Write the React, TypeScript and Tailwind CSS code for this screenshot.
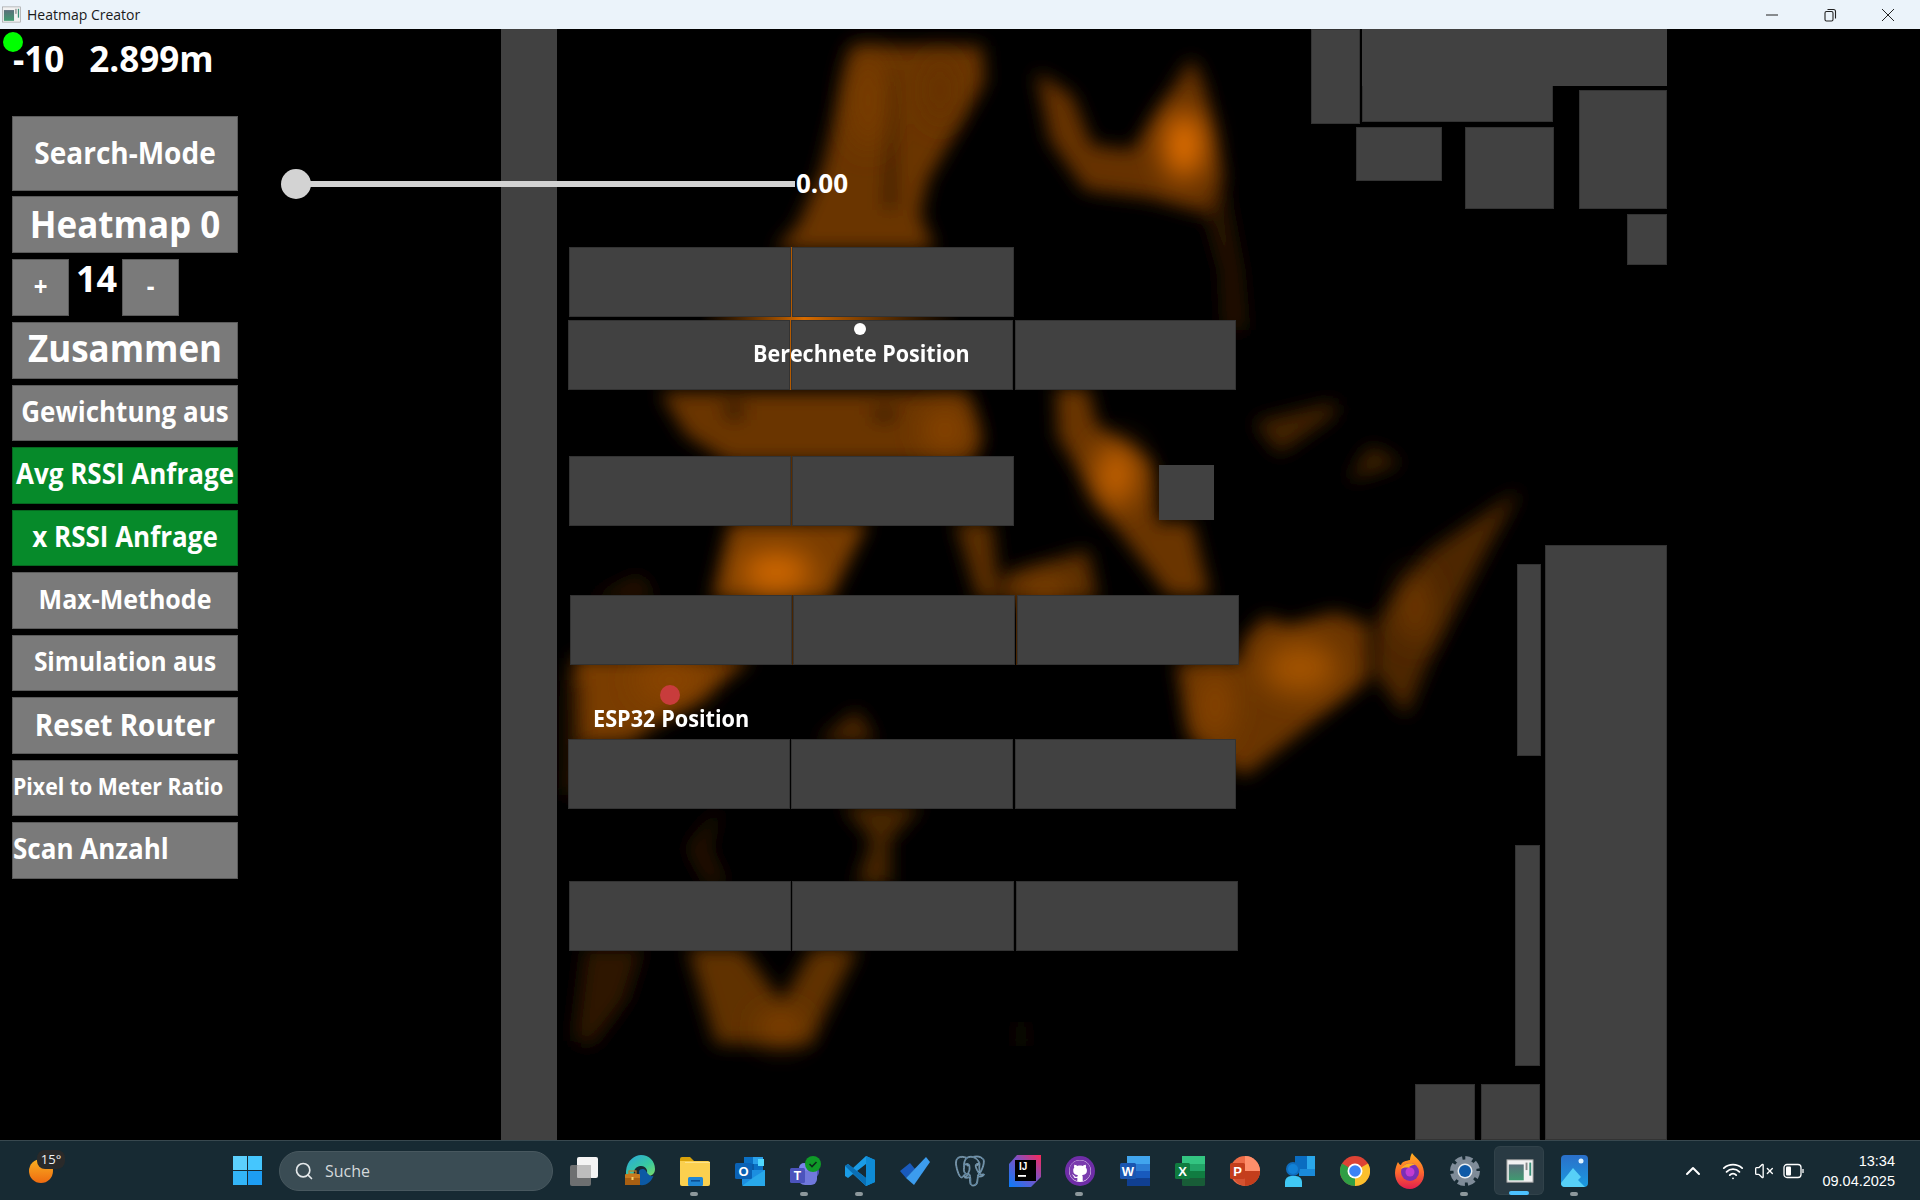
import React from "react";
import { Search, ChevronUp, Wifi, VolumeX } from "lucide-react";
import { SiPostgresql } from "react-icons/si";
import { FaGithub } from "react-icons/fa";

const Block = ({ c }: { c: string }) => (
  <div className={"absolute bg-[#414141] border border-[#333333] " + c} />
);

function Heat() {
  return (
    <svg className="absolute left-0 top-0 w-[1920px] h-[1111px]" viewBox="0 29 1920 1111">
      <defs>
        <filter id="b1" x="-40%" y="-40%" width="180%" height="180%"><feGaussianBlur stdDeviation="9" /></filter>
        <filter id="b2" x="-80%" y="-80%" width="260%" height="260%"><feGaussianBlur stdDeviation="15" /></filter>
        <linearGradient id="seam" x1="0" y1="0" x2="1" y2="0">
          <stop offset="0" stopColor="#a85400" stopOpacity="0" />
          <stop offset="0.4" stopColor="#d86c00" />
          <stop offset="1" stopColor="#a85400" stopOpacity="0" />
        </linearGradient>
      </defs>
      <g filter="url(#b1)">
        {/* top funnel */}
        <polygon fill="#6a3400" points="852,46 982,46 985,82 928,180 920,214 935,250 775,250 798,225 822,170" />
        <polygon fill="#2a1500" points="890,70 894,70 896,210 884,210" />
        {/* upper right */}
        <polygon fill="#663200" points="1036,72 1072,95 1092,145 1132,150 1192,58 1204,84 1224,180 1208,214 1150,198 1085,190 1050,140" />
        <polygon fill="#2a1500" points="1205,210 1225,190 1240,270 1245,330 1225,330 1222,270" />
        {/* under row 2 */}
        <polygon fill="#6a3400" points="660,392 968,392 982,440 972,462 728,462 686,435" />
        <polygon fill="#2a1500" points="722,402 744,402 744,420 726,420" />
        <polygon fill="#2a1500" points="872,408 900,408 892,422 872,420" />
        {/* under row 3 */}
        <polygon fill="#7a3c00" points="730,522 868,522 830,600 712,600" />
        <polygon fill="#5c2e00" points="955,522 992,522 1000,600 978,600" />
        <polygon fill="#5c2e00" points="1002,600 1004,575 1088,550 1098,600" />
        <polygon fill="#6a3400" points="1160,522 1192,522 1210,596 1170,596" />
        <polygon fill="#2a1500" points="590,600 640,575 655,600" />
        {/* under row 4 */}
        <polygon fill="#7a3c00" points="574,658 752,658 700,700 655,725 630,742 574,745" />
        <polygon fill="#2a1500" points="566,680 582,680 586,795 564,795" />
        {/* between row 4 and 5 */}
        <polygon fill="#4e2700" points="857,710 818,742 876,742" />
        <polygon fill="#4a2500" points="842,805 922,805 890,840 890,885 856,885 872,840" />
        <polygon fill="#2c1600" points="720,806 688,848 708,885 726,885 708,848" />
        {/* right strand */}
        <polygon fill="#6a3400" points="1056,388 1088,388 1097,425 1152,462 1156,500 1158,525 1210,594 1168,596 1145,565 1105,513 1058,437" />
        {/* right group */}
        <polygon fill="#6a3400" points="1265,616 1288,626 1335,612 1368,624 1368,680 1245,776 1190,738 1176,662 1240,662 1243,640" />
        <polygon fill="#4e2700" points="1520,490 1428,552 1376,622 1374,672 1406,716 1428,662 1488,548" />
        <polygon fill="#432100" points="1336,402 1254,422 1279,454 1336,414" />
        <polygon fill="#3f2000" points="1370,446 1402,463 1348,481" />
        {/* below row 6 */}
        <polygon fill="#2e1700" points="585,948 642,948 626,1000 592,1045 574,1040" />
        <polygon fill="#613000" points="688,948 742,948 782,1002 812,948 858,948 810,1044 716,1044" />
        <polygon fill="#231200" points="1018,1022 1024,1022 1026,1046 1018,1046" />
      </g>
      <g filter="url(#b2)">
        <ellipse cx="868" cy="100" rx="16" ry="50" fill="#7a3c00" />
        <ellipse cx="940" cy="90" rx="12" ry="36" fill="#663200" />
        <ellipse cx="1184" cy="145" rx="20" ry="34" fill="#e87200" />
        <ellipse cx="945" cy="430" rx="22" ry="22" fill="#8a4500" />
        <ellipse cx="776" cy="572" rx="36" ry="20" fill="#d56a00" />
        <ellipse cx="1116" cy="475" rx="20" ry="32" fill="#c86400" />
        <ellipse cx="1045" cy="592" rx="26" ry="10" fill="#934a00" />
        <ellipse cx="1300" cy="668" rx="38" ry="26" fill="#a35200" />
        <ellipse cx="1415" cy="607" rx="12" ry="36" fill="#7a3c00" />
        <ellipse cx="1215" cy="705" rx="16" ry="36" fill="#8a4500" />
        <ellipse cx="781" cy="1028" rx="22" ry="14" fill="#8a4500" />
        <ellipse cx="670" cy="680" rx="34" ry="20" fill="#8a4500" />
      </g>
      <g>
        <rect x="791" y="247" width="1" height="70" fill="#b45a00" />
        <rect x="790" y="320" width="1" height="70" fill="#b45a00" />
        <rect x="791" y="456" width="1" height="70" fill="#5a2d00" />
        <rect x="700" y="317" width="260" height="3" fill="url(#seam)" />
        <rect x="792" y="595" width="1" height="70" fill="#4a2500" />
        <rect x="1016" y="595" width="1" height="70" fill="#4a2500" />
      </g>
    </svg>
  );
}

const Slot = ({ children, pill, active }: { children: React.ReactNode; pill?: boolean; active?: boolean }) => (
  <div className="relative w-[55px] h-[60px] flex items-center justify-center shrink-0">
    {active && <div className="absolute left-[2px] top-[5px] w-[50px] h-[49px] rounded-md bg-[#ffffff14] border border-[#ffffff0a]" />}
    <div className="relative flex items-center justify-center">{children}</div>
    {pill && <div className="absolute bottom-[5px] left-[23px] w-[8px] h-[4px] rounded-full bg-[#8d989c]" />}
    {active && <div className="absolute bottom-[6px] left-[17px] w-[20px] h-[4px] rounded-full bg-[#4cc2ff]" />}
  </div>
);

const WindowGlyph = ({ s }: { s: number }) => (
  <svg width={s} height={s} viewBox="0 0 30 30">
    <rect x="1" y="3" width="28" height="24" fill="#f2f2f2" stroke="#9a9a9a" strokeWidth="1" />
    <defs><linearGradient id="wg" x1="0" y1="0" x2="0" y2="1"><stop offset="0" stopColor="#5a6f7a" /><stop offset="1" stopColor="#3f9a70" /></linearGradient></defs>
    <rect x="3" y="8" width="16" height="17" fill="url(#wg)" />
    <rect x="21" y="6" width="2" height="8" fill="#888" />
    <rect x="25" y="6" width="2" height="14" fill="#3a8f78" />
  </svg>
);

const I = { fontFamily: "'Liberation Sans', sans-serif" };

function Icons() {
  return (
    <>
      <Slot>
        <svg width="31" height="30" viewBox="0 0 31 30">
          <rect x="8" y="1" width="21" height="21" rx="2" fill="#f4f4f4" />
          <rect x="1" y="9" width="21" height="21" rx="2" fill="#777777" opacity="0.9" />
          <rect x="8" y="9" width="14" height="13" rx="1" fill="#bdbdbd" />
        </svg>
      </Slot>
      <Slot>
        <svg width="30" height="32" viewBox="0 0 30 32">
          <defs><linearGradient id="eg" x1="0" y1="0" x2="1" y2="1"><stop offset="0" stopColor="#2aa7de" /><stop offset="0.6" stopColor="#38c9a0" /><stop offset="1" stopColor="#7ddb6a" /></linearGradient></defs>
          <path d="M1 16 C2 5 10 0 16 0 C24 0 30 6 30 14 C30 20 25 22 21 20 C24 16 21 10 15 11 C10 12 8 16 9 20 L1 20Z" fill="url(#eg)" />
          <path d="M14 16 C15 14 19 13 21 16 C25 23 29 22 29 19 C27 27 21 31 15 30 L14 24Z" fill="#0c59a4" />
          <rect x="0" y="19" width="15" height="11" rx="1" fill="#c87a1e" />
          <rect x="0" y="23" width="15" height="7" fill="#a85f12" />
          <rect x="4" y="16" width="7" height="3" fill="none" stroke="#c87a1e" strokeWidth="1.2" />
          <rect x="6.5" y="22" width="2" height="3" fill="#f7d36b" />
        </svg>
      </Slot>
      <Slot pill>
        <svg width="30" height="30" viewBox="0 0 30 30">
          <path d="M0 3 a2 2 0 0 1 2-2 h8 l4 4 h-14Z" fill="#d9a20a" />
          <path d="M0 5 h28 a2 2 0 0 1 2 2 v21 a2 2 0 0 1-2 2 h-26 a2 2 0 0 1-2-2Z" fill="#fbd04f" />
          <path d="M5 7 h25 v-1 h-25Z" fill="#fde28a" />
          <rect x="8" y="21" width="15" height="9" rx="1.5" fill="#1f86d4" />
          <rect x="11" y="24" width="9" height="1.6" fill="#0b4f94" />
        </svg>
      </Slot>
      <Slot>
        <svg width="30" height="30" viewBox="0 0 30 30">
          <rect x="9" y="1" width="19" height="14" fill="#0a70c4" />
          <rect x="18" y="1" width="10" height="7" fill="#2aa0ea" />
          <rect x="23" y="3" width="6" height="7" fill="#50d9ff" />
          <rect x="9" y="8" width="10" height="7" fill="#0a5aa6" />
          <path d="M7 14 L30 14 V28 a2 2 0 0 1-2 2 H9 a2 2 0 0 1-2-2Z" fill="#1b8ee0" />
          <path d="M7 30 L19 21 L30 14 V30Z" fill="#28a8ea" />
          <rect x="0" y="7" width="17" height="16" rx="1.5" fill="#0a62b5" />
          <text x="8.5" y="20" textAnchor="middle" fontSize="13" fontWeight="700" fill="#fff" style={I}>O</text>
        </svg>
      </Slot>
      <Slot pill>
        <div className="relative w-[32px] h-[30px]">
          <svg width="32" height="32" viewBox="0 0 32 32">
            <circle cx="24" cy="16" r="6" fill="#4f55b8" />
            <circle cx="15" cy="12" r="5" fill="#7b83eb" />
            <path d="M9 15 H28 V23 a6 6 0 0 1-6 6 H16 a7 7 0 0 1-7-7Z" fill="#7078dc" />
            <rect x="1" y="12" width="15" height="15" rx="1.5" fill="#4b53bc" />
            <text x="8.5" y="24" textAnchor="middle" fontSize="12" fontWeight="700" fill="#fff" style={I}>T</text>
            <circle cx="24" cy="8" r="8" fill="#0f9a28" />
            <path d="M20.5 8 l2.5 2.5 l4.5-4.5" stroke="#0c2a1a" strokeWidth="1.6" fill="none" />
          </svg>
        </div>
      </Slot>
      <Slot pill>
        <svg width="30" height="32" viewBox="0 0 30 32">
          <path d="M21 1 L30 5 V27 L21 31 L8 19 L3 23 L0 21 V11 L3 9 L8 13Z M21 9 L12 16 L21 23Z" fill="#1a9ce6" fillRule="evenodd" />
          <path d="M21 1 L30 5 V27 L21 31Z" fill="#0e8bd6" />
          <path d="M0 11 L3 9 L21 23 V31 Z" fill="#0a6fb5" />
        </svg>
      </Slot>
      <Slot>
        <svg width="32" height="30" viewBox="0 0 32 30">
          <path d="M1 15 L11 7 L16 13 L7 22Z" fill="#195abd" />
          <path d="M7 22 L27 1 L31 6 L15 29 Z" fill="#3c9cee" />
        </svg>
      </Slot>
      <Slot>
        <div className="relative w-[30px] h-[36px] flex items-center justify-center">
          <SiPostgresql size={34} color="#2f6792" style={{ stroke: "#a9c0d0", strokeWidth: 0.5 }} />
        </div>
      </Slot>
      <Slot>
        <svg width="32" height="32" viewBox="0 0 32 32">
          <defs><linearGradient id="ij" x1="0" y1="1" x2="1" y2="0"><stop offset="0" stopColor="#087cfa" /><stop offset="0.55" stopColor="#7a52c7" /><stop offset="1" stopColor="#fe2857" /></linearGradient></defs>
          <path d="M8 0 H32 V22 L22 32 H0 V9Z" fill="url(#ij)" />
          <rect x="6" y="5" width="21" height="21" fill="#000" />
          <text x="10" y="15" fontSize="10" fontWeight="700" fill="#fff" style={I}>IJ</text>
          <rect x="9" y="20" width="8" height="1.8" fill="#fff" />
        </svg>
      </Slot>
      <Slot pill>
        <div className="relative w-[30px] h-[30px] rounded-full bg-[#6f2da8] flex items-center justify-center">
          <div className="w-[22px] h-[22px] rounded-full bg-white flex items-center justify-center">
            <FaGithub size={22} color="#7a3cae" />
          </div>
        </div>
      </Slot>
      <Slot>
        <svg width="30" height="30" viewBox="0 0 30 30">
          <rect x="7" y="0" width="23" height="30" rx="1.5" fill="#185abd" />
          <rect x="7" y="0" width="23" height="8" fill="#41a5ee" />
          <rect x="7" y="8" width="23" height="7" fill="#2b7cd3" />
          <rect x="7" y="22" width="23" height="8" fill="#103f91" />
          <rect x="0" y="7" width="16" height="16" rx="1.5" fill="#1a56b0" />
          <text x="8" y="20" textAnchor="middle" fontSize="13" fontWeight="700" fill="#fff" style={I}>W</text>
        </svg>
      </Slot>
      <Slot>
        <svg width="30" height="30" viewBox="0 0 30 30">
          <rect x="7" y="0" width="23" height="30" rx="1.5" fill="#185c37" />
          <rect x="7" y="0" width="23" height="8" fill="#33c481" />
          <rect x="18" y="8" width="12" height="7" fill="#21a366" />
          <rect x="7" y="8" width="11" height="7" fill="#21a366" />
          <rect x="7" y="15" width="23" height="7" fill="#107c41" />
          <rect x="0" y="7" width="15" height="16" rx="1.5" fill="#0f7b3f" />
          <text x="7.5" y="20" textAnchor="middle" fontSize="13" fontWeight="700" fill="#fff" style={I}>X</text>
        </svg>
      </Slot>
      <Slot>
        <svg width="30" height="30" viewBox="0 0 30 30">
          <circle cx="15" cy="15" r="15" fill="#ed6c47" />
          <path d="M15 0 A15 15 0 0 1 30 15 H15Z" fill="#ff8f6b" />
          <path d="M15 15 H30 A15 15 0 0 1 15 30Z" fill="#c43e1c" />
          <path d="M2 15 A15 15 0 0 0 15 30 V15Z" fill="#d35230" />
          <rect x="0" y="7" width="15" height="16" rx="1.5" fill="#c43e1c" />
          <text x="7.5" y="20" textAnchor="middle" fontSize="13" fontWeight="700" fill="#fff" style={I}>P</text>
        </svg>
      </Slot>
      <Slot>
        <svg width="30" height="32" viewBox="0 0 30 32">
          <rect x="10" y="1" width="12" height="13" fill="#0a6cc0" />
          <rect x="22" y="1" width="8" height="13" fill="#2aa7ea" />
          <rect x="14" y="14" width="16" height="7" fill="#1a8ad9" />
          <circle cx="8" cy="14" r="7" fill="#0f6cbd" />
          <circle cx="8" cy="14" r="5" fill="#1281d6" />
          <path d="M0 32 V27 a6 6 0 0 1 6-6 h5 a6 6 0 0 1 6 6 v5Z" fill="#40c8f4" />
        </svg>
      </Slot>
      <Slot>
        <svg width="30" height="36" viewBox="0 0 30 30">
          <circle cx="15" cy="15" r="15" fill="#dd4335" />
          <path d="M15 15 L28 7.5 A15 15 0 0 1 15 30Z" fill="#fbc02d" />
          <path d="M15 15 L15 30 A15 15 0 0 1 2 7.5Z" fill="#2f9e44" />
          <circle cx="15" cy="15" r="7.5" fill="#fff" />
          <circle cx="15" cy="15" r="5.8" fill="#3b82f6" />
        </svg>
      </Slot>
      <Slot>
        <svg width="30" height="36" viewBox="0 0 30 36">
          <defs><linearGradient id="ff" x1="0" y1="0" x2="0" y2="1"><stop offset="0" stopColor="#ffb01f" /><stop offset="0.5" stopColor="#ff6d2d" /><stop offset="1" stopColor="#e01d4e" /></linearGradient></defs>
          <path d="M17 0 C20 5 28 8 29 19 C30 29 22 36 15 36 C6 36 0 29 0 20 C0 15 2 11 3 9 C4 11 5 12 6 12 C7 8 11 8 15 7 C15 4 16 2 17 0Z" fill="url(#ff)" />
          <circle cx="15" cy="19" r="9" fill="#7b2fb5" />
          <circle cx="15" cy="19" r="4.5" fill="#c33bd1" />
          <path d="M6 16 C9 10 17 9 20 12 C16 12 13 14 15 15 C10 14 8 15 6 16Z" fill="#ffb11f" />
        </svg>
      </Slot>
      <Slot pill>
        <svg width="30" height="30" viewBox="0 0 30 30">
          <circle cx="15" cy="15" r="11.5" fill="#7f8c99" />
          <circle cx="15" cy="15" r="13" fill="none" stroke="#7f8c99" strokeWidth="4" strokeDasharray="7.2 3" />
          <circle cx="15" cy="15" r="7.5" fill="#e7edf2" />
          <circle cx="15" cy="15" r="6" fill="#0e5aa7" />
        </svg>
      </Slot>
      <Slot active><WindowGlyph s={28} /></Slot>
      <Slot pill>
        <svg width="27" height="32" viewBox="0 0 27 32">
          <defs><linearGradient id="ph" x1="0" y1="0" x2="0" y2="1"><stop offset="0" stopColor="#2a6fc9" /><stop offset="1" stopColor="#1a9be0" /></linearGradient></defs>
          <rect x="0" y="0" width="27" height="32" rx="4" fill="url(#ph)" />
          <circle cx="20" cy="6" r="2.5" fill="#dff3ff" />
          <path d="M0 28 L12 13 L20 22 L17 25 L24 32 H4 a4 4 0 0 1-4-4Z" fill="#57d0f7" />
        </svg>
      </Slot>
    </>
  );
}

export default function App() {
  return (
    <div className="w-[1920px] h-[1200px] flex flex-col overflow-hidden bg-black font-['Open_Sans',sans-serif]">
      {/* title bar */}
      <div className="h-[29px] shrink-0 bg-[#ebf3fa] flex items-center pl-[2px] text-black">
        <WindowGlyph s={19} />
        <span className="ml-[6px] text-[14px] text-[#1a1a1a]">Heatmap Creator</span>
        <div className="ml-auto flex items-center pr-[3px] h-full">
          <div className="w-[58px] flex justify-center">
            <svg width="14" height="14" viewBox="0 0 14 14"><path d="M1 7 H13" stroke="#222" strokeWidth="1" /></svg>
          </div>
          <div className="w-[58px] flex justify-center">
            <svg width="14" height="14" viewBox="0 0 14 14" fill="none" stroke="#222" strokeWidth="1.1"><rect x="2" y="3.5" width="8" height="9.5" rx="1.5" /><path d="M4.5 1.5 H10.5 a2 2 0 0 1 2 2 V10.5" /></svg>
          </div>
          <div className="w-[58px] flex justify-center">
            <svg width="14" height="14" viewBox="0 0 14 14"><path d="M1 1 L13 13 M13 1 L1 13" stroke="#222" strokeWidth="1" /></svg>
          </div>
        </div>
      </div>

      {/* app canvas */}
      <div className="relative flex-1 bg-black overflow-hidden">
        <Heat />
        <Block c="left-[501px] top-0 w-[56px] h-[1111px] border-none" />
        <Block c="left-[1311px] top-0 w-[49px] h-[95px]" />
        <Block c="left-[1362px] top-0 w-[191px] h-[93px]" />
        <Block c="left-[1362px] top-0 w-[305px] h-[57px] border-none" />
        <Block c="left-[1356px] top-[98px] w-[86px] h-[54px]" />
        <Block c="left-[1465px] top-[98px] w-[89px] h-[82px]" />
        <Block c="left-[1579px] top-[61px] w-[88px] h-[119px]" />
        <Block c="left-[1627px] top-[185px] w-[40px] h-[51px]" />
        <Block c="left-[1545px] top-[516px] w-[122px] h-[595px]" />
        <Block c="left-[1517px] top-[535px] w-[24px] h-[192px]" />
        <Block c="left-[1515px] top-[816px] w-[25px] h-[221px]" />
        <Block c="left-[1415px] top-[1055px] w-[60px] h-[56px]" />
        <Block c="left-[1481px] top-[1055px] w-[59px] h-[56px]" />
        <Block c="left-[1159px] top-[436px] w-[55px] h-[55px] border-none" />

        <Block c="left-[569px] top-[218px] w-[222px] h-[70px]" />
        <Block c="left-[792px] top-[218px] w-[222px] h-[70px]" />
        <Block c="left-[568px] top-[291px] w-[222px] h-[70px]" />
        <Block c="left-[791px] top-[291px] w-[222px] h-[70px]" />
        <Block c="left-[1015px] top-[291px] w-[221px] h-[70px]" />
        <Block c="left-[569px] top-[427px] w-[222px] h-[70px]" />
        <Block c="left-[792px] top-[427px] w-[222px] h-[70px]" />
        <Block c="left-[570px] top-[566px] w-[222px] h-[70px]" />
        <Block c="left-[793px] top-[566px] w-[222px] h-[70px]" />
        <Block c="left-[1017px] top-[566px] w-[222px] h-[70px]" />
        <Block c="left-[568px] top-[710px] w-[222px] h-[70px]" />
        <Block c="left-[791px] top-[710px] w-[222px] h-[70px]" />
        <Block c="left-[1015px] top-[710px] w-[221px] h-[70px]" />
        <Block c="left-[569px] top-[852px] w-[222px] h-[70px]" />
        <Block c="left-[792px] top-[852px] w-[222px] h-[70px]" />
        <Block c="left-[1016px] top-[852px] w-[222px] h-[70px]" />

        {/* slider */}
        <div className="absolute left-[296px] top-[152px] w-[499px] h-[6px] bg-[#d3d3d3]" />
        <div className="absolute left-[281px] top-[140px] w-[30px] h-[30px] rounded-full bg-[#d3d3d3]" />
        <div className="absolute left-[796px] top-[137px] text-[26px] leading-[34px] font-bold text-white">0.00</div>

        {/* positions */}
        <div className="absolute left-[854px] top-[294px] w-[12px] h-[12px] rounded-full bg-white" />
        <div className="absolute left-[753px] top-[309px] text-[21.5px] leading-[30px] font-bold text-white whitespace-nowrap scale-y-[1.1]">Berechnete Position</div>
        <div className="absolute left-[660px] top-[656px] w-[20px] h-[20px] rounded-full bg-[#c83c3c]" />
        <div className="absolute left-[593px] top-[674px] text-[21.7px] leading-[30px] font-bold text-white whitespace-nowrap scale-y-[1.1]">ESP32 Position</div>

        {/* control column */}
        <div className="relative w-[238px] pl-[12px] flex flex-col text-white font-bold">
          <div className="absolute left-[3px] top-[3px] w-[20px] h-[20px] rounded-full bg-[#00ff00]" />
          <div className="h-[87px] pl-[1px] pt-[10px] text-[35px] leading-[40px] flex gap-[25px]">
            <span>-10</span><span>2.899m</span>
          </div>
          <div className="flex flex-col gap-[6px] w-[226px]">
            <Btn c="h-[75px] text-[28px] -mb-[1px] justify-center">Search-Mode</Btn>
            <Btn c="h-[57px] text-[35px] justify-center pt-[3px]">Heatmap 0</Btn>
            <div className="flex h-[57px]">
              <Btn c="w-[57px] h-[57px] text-[24px] justify-center">+</Btn>
              <div className="w-[53px] text-[36px] leading-[40px] pl-[7px]">14</div>
              <Btn c="w-[57px] h-[57px] text-[24px] justify-center">-</Btn>
            </div>
            <Btn c="h-[57px] text-[35px] justify-center">Zusammen</Btn>
            <Btn c="h-[56px] text-[26px] justify-center">Gewichtung aus</Btn>
            <Btn g c="h-[57px] text-[26px] justify-center">Avg RSSI Anfrage</Btn>
            <Btn g c="h-[56px] text-[26px] justify-center">x RSSI Anfrage</Btn>
            <Btn c="h-[57px] text-[25px] justify-center">Max-Methode</Btn>
            <Btn c="h-[56px] text-[24.5px] justify-center">Simulation aus</Btn>
            <Btn c="h-[57px] text-[28px] justify-center">Reset Router</Btn>
            <Btn c="h-[56px] text-[21.3px]">Pixel to Meter Ratio</Btn>
            <Btn c="h-[57px] text-[26px]">Scan Anzahl</Btn>
          </div>
        </div>
      </div>

      {/* taskbar */}
      <div className="h-[60px] shrink-0 bg-[#172a33] border-t border-[#38484f] flex items-center relative">
        <div className="relative ml-[29px] w-[24px] h-[30px]">
          <div className="absolute left-0 top-[3px] w-[24px] h-[24px] rounded-full bg-gradient-to-b from-[#f7b021] to-[#ee6a10]" />
          <div className="absolute left-[8px] -top-[6px] w-[28px] h-[19px] rounded-[8px] bg-[#2a2a2a] text-[#f2f2f2] text-[13px] leading-[19px] text-center">15°</div>
        </div>
        <div className="ml-[180px] w-[29px] h-[29px] grid grid-cols-2 gap-[1px] shrink-0">
          <div className="bg-[#5cd0fd]" /><div className="bg-[#45c6fe]" />
          <div className="bg-[#33b5f8]" /><div className="bg-[#1d9df3]" />
        </div>
        <div className="ml-[17px] w-[274px] h-[40px] rounded-full bg-[#3a4c54] border border-[#48585f] flex items-center pl-[14px] shrink-0">
          <Search size={20} color="#e4e8ea" strokeWidth={2} />
          <span className="ml-[11px] text-[16px] text-[#d4d9db]">Suche</span>
        </div>
        <div className="ml-[4px] flex items-center"><Icons /></div>
        <div className="ml-[79px] flex items-center text-white">
          <ChevronUp size={24} strokeWidth={2} />
          <Wifi size={22} className="ml-[17px]" strokeWidth={2} />
          <VolumeX size={20} className="ml-[10px]" strokeWidth={1.6} />
          <svg className="ml-[9px]" width="21" height="16" viewBox="0 0 21 16" fill="none" stroke="#fff" strokeWidth="1.3">
            <rect x="1" y="1.5" width="17" height="13" rx="3" />
            <rect x="3" y="3.5" width="5" height="9" rx="1" fill="#fff" stroke="none" />
            <path d="M20 6 V10" />
          </svg>
        </div>
        <div className="ml-auto pr-[25px] flex flex-col items-end text-[14.5px] leading-[20px] text-white font-['Liberation_Sans',sans-serif]">
          <span>13:34</span>
          <span>09.04.2025</span>
        </div>
      </div>
    </div>
  );
}

function Btn({ c, g, children }: { c: string; g?: boolean; children: React.ReactNode }) {
  return (
    <div className={"flex items-center whitespace-nowrap overflow-hidden border " + (g ? "bg-[#068a2a] border-[#05671f] " : "bg-[#7a7a7a] border-[#5a5a5a] ") + c}>
      <span className="block -translate-y-[2px] scale-y-[1.08]">{children}</span>
    </div>
  );
}
